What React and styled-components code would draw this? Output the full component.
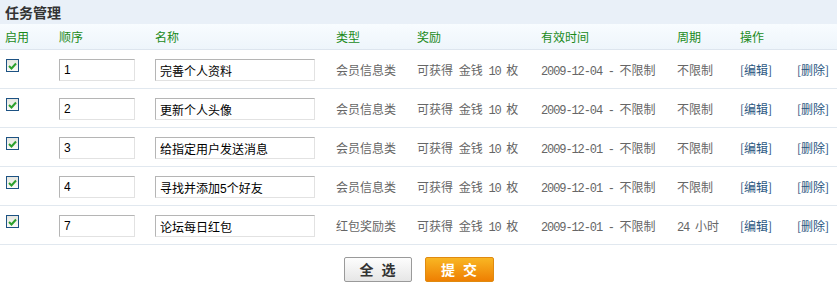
import React from 'react';
import styled, { createGlobalStyle } from 'styled-components';

const Global = createGlobalStyle`
  body {
    margin: 0;
    background: #fff;
    font-family: "Noto Sans CJK SC", "DejaVu Sans", sans-serif;
    font-size: 12px;
    color: #666;
  }
`;

const Page = styled.div`
  width: 837px;
`;

const TitleBar = styled.div`
  height: 24px;
  line-height: 24px;
  padding-left: 5px;
  background: #e9f0f8;
  color: #333;
  font-size: 14px;
  font-weight: bold;
`;

const Table = styled.table`
  width: 837px;
  border-collapse: collapse;
  table-layout: fixed;
`;

const Th = styled.th`
  height: 25px;
  padding: 0 0 0 5px;
  text-align: left;
  font-weight: normal;
  line-height: 16px;
  color: #1a8a1a;
  background: linear-gradient(#f8fcff, #eef5fb);
  border-bottom: 1px solid #dde5ee;
`;

const Td = styled.td`
  height: 22px;
  padding: 9px 0 7px ${p => (p.$pad ?? 5)}px;
  line-height: 22px;
  vertical-align: top;
  border-bottom: 1px solid #e1e8ef;
  white-space: nowrap;
  word-spacing: 3px;
  color: #666;
`;

const Check = styled.span`
  display: flex;
  align-items: center;
  justify-content: center;
  width: 11px;
  height: 11px;
  border: 1px solid #1d5283;
  background: linear-gradient(#e6e6e0, #fbfbf8);
`;

const TextBox = styled.input`
  display: block;
  box-sizing: border-box;
  width: ${p => p.$w}px;
  height: 22px;
  margin: 0;
  padding: 0 4px;
  border: 1px solid #b5b5b5;
  border-right-color: #e2e2e2;
  border-bottom-color: #e2e2e2;
  font-family: "Liberation Sans", "Noto Sans CJK SC", sans-serif;
  font-size: 12px;
  color: #000;
  outline: none;
`;

const Mono = styled.span`
  font-family: "Liberation Mono", "DejaVu Sans Mono", monospace;
  font-size: 12px;
  line-height: 1;
  letter-spacing: -1.1px;
  word-spacing: 0;
`;

const Link = styled.a`
  color: #2b577f;
  text-decoration: none;
`;

const Actions = styled.div`
  display: flex;
  justify-content: center;
  gap: 13px;
  padding-top: 12px;
`;

const Button = styled.button`
  width: ${p => (p.$primary ? 69 : 68)}px;
  height: 25px;
  padding: 0;
  font-family: "Noto Sans CJK SC", sans-serif;
  font-size: 14px;
  font-weight: bold;
  line-height: 23px;
  letter-spacing: 8px;
  text-indent: 8px;
  border-radius: 2px;
  cursor: pointer;
  color: ${p => (p.$primary ? '#fff' : '#333')};
  border: 1px solid ${p => (p.$primary ? '#e08a10' : '#9a9a9a')};
  background: ${p =>
    p.$primary
      ? 'linear-gradient(#f9b623, #ee7f02)'
      : 'linear-gradient(#fdfdfd, #e6e6e6)'};
`;

const tasks = [
  { order: '1', name: '完善个人资料', type: '会员信息类', date: '2009-12-04', period: '不限制' },
  { order: '2', name: '更新个人头像', type: '会员信息类', date: '2009-12-04', period: '不限制' },
  { order: '3', name: '给指定用户发送消息', type: '会员信息类', date: '2009-12-01', period: '不限制' },
  { order: '4', name: '寻找并添加5个好友', type: '会员信息类', date: '2009-12-01', period: '不限制' },
  { order: '7', name: '论坛每日红包', type: '红包奖励类', date: '2009-12-01', period: '24 小时' },
];

const widths = [54, 96, 181, 81, 124, 136, 63, 57, 45];

const CheckMark = () => (
  <Check>
    <svg width="9" height="8" viewBox="0 0 9 8">
      <path d="M1 4 L3.5 6.5 L8 1.5" fill="none" stroke="#2ca02c" strokeWidth="2" />
    </svg>
  </Check>
);

const Period = ({ value }) => {
  const m = value.match(/^(\d+)(.*)$/);
  if (!m) return value;
  return (
    <>
      <Mono>{m[1]}</Mono>
      {m[2]}
    </>
  );
};

export default function App() {
  return (
    <Page>
      <Global />
      <TitleBar>任务管理</TitleBar>
      <Table>
        <colgroup>
          {widths.map((w, i) => (
            <col key={i} style={{ width: w }} />
          ))}
        </colgroup>
        <thead>
          <tr>
            <Th>启用</Th>
            <Th>顺序</Th>
            <Th>名称</Th>
            <Th>类型</Th>
            <Th>奖励</Th>
            <Th>有效时间</Th>
            <Th>周期</Th>
            <Th>操作</Th>
            <Th />
          </tr>
        </thead>
        <tbody>
          {tasks.map(t => (
            <tr key={t.order}>
              <Td $pad={6}>
                <CheckMark />
              </Td>
              <Td>
                <TextBox $w={76} defaultValue={t.order} />
              </Td>
              <Td>
                <TextBox $w={160} defaultValue={t.name} />
              </Td>
              <Td>{t.type}</Td>
              <Td>
                可获得 金钱 <Mono>10</Mono> 枚
              </Td>
              <Td>
                <Mono>{t.date}</Mono> <Mono>-</Mono> 不限制
              </Td>
              <Td>
                <Period value={t.period} />
              </Td>
              <Td>
                <Link href="#">[编辑]</Link>
              </Td>
              <Td>
                <Link href="#">[删除]</Link>
              </Td>
            </tr>
          ))}
        </tbody>
      </Table>
      <Actions>
        <Button>全选</Button>
        <Button $primary>提交</Button>
      </Actions>
    </Page>
  );
}
